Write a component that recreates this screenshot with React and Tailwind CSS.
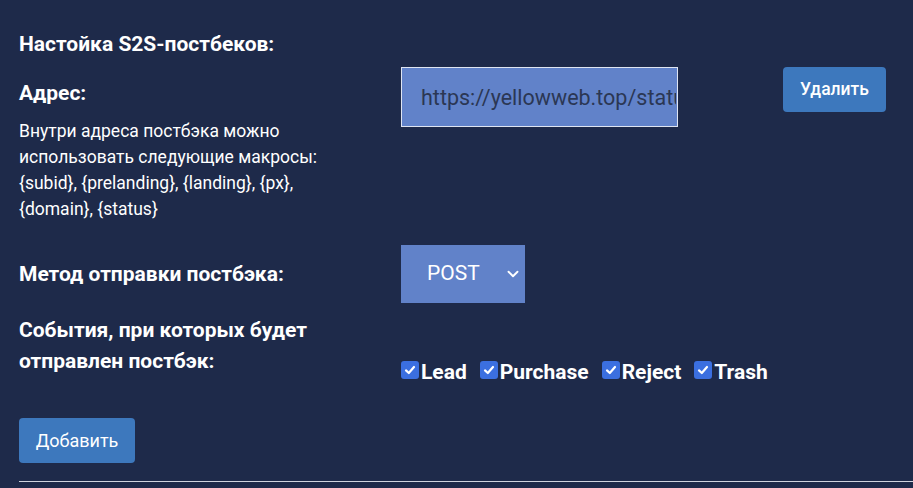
import React, { useState } from "react";
import { ChevronDown } from "lucide-react";

const events = ["Lead", "Purchase", "Reject", "Trash"];

const Check = ({ label, checked, onToggle }) => (
  <label className="flex items-center cursor-pointer mr-[13px]" onClick={onToggle}>
    <span className="w-[18px] h-[18px] rounded-[3px] bg-[#3b6fe0] flex items-center justify-center mb-[4px]">
      {checked && (
        <svg width="12" height="12" viewBox="0 0 12 12" fill="none">
          <path d="M2 6.4 4.8 9 10 3" stroke="white" strokeWidth="2.2" strokeLinecap="round" strokeLinejoin="round" />
        </svg>
      )}
    </span>
    <span className="ml-[2px] text-[21px] leading-[28px] font-bold text-white">{label}</span>
  </label>
);

export default function App() {
  const [url, setUrl] = useState("https://yellowweb.top/status.php?subid={subid}&status={status}");
  const [checked, setChecked] = useState({ Lead: true, Purchase: true, Reject: true, Trash: true });

  return (
    <div className="min-h-[488px] bg-[#1e2a4a] pl-[19px] pt-[31px] font-['Roboto',sans-serif] text-white overflow-hidden">
      <h3 className="text-[21px] leading-[27px] font-bold">Настойка S2S-постбеков:</h3>

      <div className="flex mt-[9px]">
        <div className="w-[382px] pt-[13px]">
          <h4 className="text-[21px] leading-[27px] font-bold">Адрес:</h4>
          <p className="mt-[11px] text-[17.5px] leading-[26px] w-[340px]">
            Внутри адреса постбэка можно использовать следующие макросы: {"{subid}"}, {"{prelanding}"}, {"{landing}"}, {"{px}"}, {"{domain}"}, {"{status}"}
          </p>
        </div>
        <div className="flex items-start">
          <input
            value={url}
            onChange={(e) => setUrl(e.target.value)}
            className="w-[277px] h-[60px] pl-[19px] pr-[1px] bg-[#6182c9] border border-[#dfe5f2] text-[21.5px] text-[#2b3754] outline-none"
          />
          <button className="ml-[105px] w-[103px] h-[45px] rounded-[4px] bg-[#3d78bd] text-[17.5px] font-medium text-white">
            Удалить
          </button>
        </div>
      </div>

      <div className="flex items-center mt-[23px]">
        <div className="w-[382px] text-[21px] leading-[27px] font-bold">Метод отправки постбэка:</div>
        <div className="w-[124px] h-[58px] bg-[#6182c9] flex items-center pl-[26px] pr-[3px]">
          <span className="text-[21px] text-white flex-1">POST</span>
          <ChevronDown size={18} strokeWidth={2.5} className="text-white" />
        </div>
      </div>

      <div className="flex mt-[12px]">
        <div className="w-[382px] text-[21px] leading-[31px] font-bold">
          События, при которых будет
          <br />
          отправлен постбэк:
        </div>
        <div className="flex mt-[43px]">
          {events.map((ev) => (
            <Check
              key={ev}
              label={ev}
              checked={checked[ev]}
              onToggle={(e) => {
                e.preventDefault();
                setChecked({ ...checked, [ev]: !checked[ev] });
              }}
            />
          ))}
        </div>
      </div>

      <button className="mt-[32px] w-[116px] h-[45px] rounded-[4px] bg-[#3d78bd] text-[18px] text-white">
        Добавить
      </button>

      <div className="mt-[18px] h-px bg-[#d0d4de]" />
    </div>
  );
}
